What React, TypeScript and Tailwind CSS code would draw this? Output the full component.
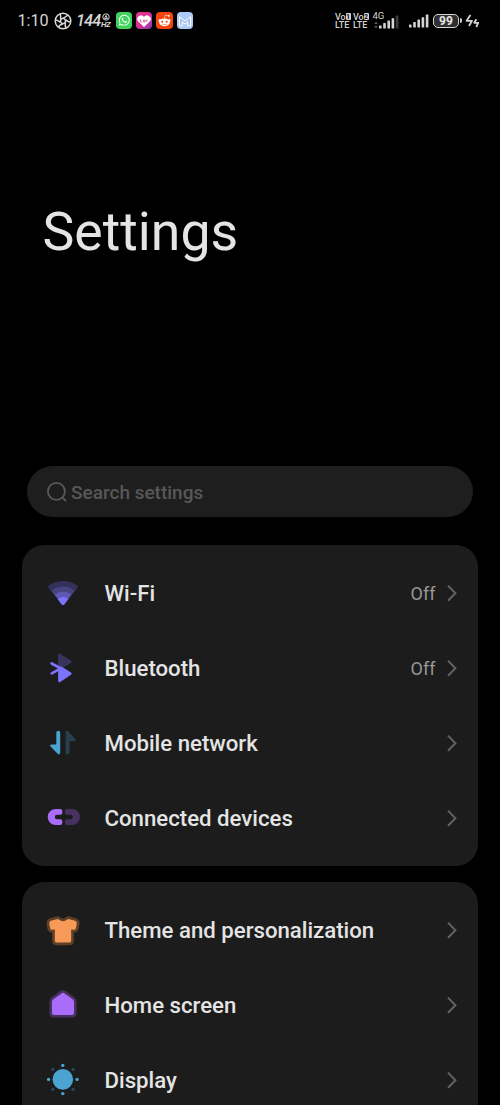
import type { ReactNode } from "react";
import { FaRedditAlien, FaWhatsapp } from "react-icons/fa";

type Item = {
  label: string;
  icon: ReactNode;
  value?: string;
};

const connectivity: Item[] = [
  { label: "Wi-Fi", icon: <WifiIcon />, value: "Off" },
  { label: "Bluetooth", icon: <BluetoothIcon />, value: "Off" },
  { label: "Mobile network", icon: <NetworkIcon /> },
  { label: "Connected devices", icon: <LinkIcon /> },
];

const appearance: Item[] = [
  { label: "Theme and personalization", icon: <ShirtIcon /> },
  { label: "Home screen", icon: <HomeIcon /> },
  { label: "Display", icon: <DisplayIcon /> },
];

function IconBox({ children }: { children: ReactNode }) {
  return (
    <svg viewBox="0 0 40 40" className="size-10 shrink-0" fill="none" strokeLinecap="round" strokeLinejoin="round">
      {children}
    </svg>
  );
}

function WifiIcon() {
  return (
    <IconBox>
      <path d="M20 32 L5.4 14.8 Q4.6 13.6 5.8 12.6 Q12 8 20 8 Q28 8 34.2 12.6 Q35.4 13.6 34.6 14.8 Z" fill="#34325a" />
      <path d="M20 32 L8.2 17.8 A18.4 18.4 0 0 1 31.8 17.8 Z" fill="#484480" />
      <path d="M20 32 L11.6 21.8 A13.2 13.2 0 0 1 28.4 21.8 Z" fill="#5f59b5" />
      <path d="M18.6 31.4 L14.6 26 A8.4 8.4 0 0 1 25.4 26 L21.4 31.4 Q20 32.8 18.6 31.4 Z" fill="#7b74fb" />
    </IconBox>
  );
}

function BluetoothIcon() {
  return (
    <IconBox>
      <path d="M16.4 6.8 V18.4 L20.5 18 L27.3 13.9 Z" fill="#37345d" stroke="#37345d" strokeWidth="2.6" />
      <path d="M16.5 20.4 L18.6 20.2 L27.2 25.7 L16.5 32.8 Z" fill="#7b74fb" stroke="#7b74fb" strokeWidth="2.8" />
      <path d="M8.6 15.4 L19 21 M8.8 25.4 L17.6 20.4" stroke="#7b74fb" strokeWidth="2.8" />
    </IconBox>
  );
}

function NetworkIcon() {
  return (
    <IconBox>
      <path d="M13.3 9.6 Q13.3 7.8 15.2 7.8 Q17.2 7.8 17.2 9.6 V29.8 Q16.7 32.2 14.9 31 L7.3 23.2 Q6.7 21.8 8.3 21.6 H13.3 Z" fill="#4aa3d0" />
      <path d="M26.5 29.4 Q26.5 31.3 24.6 31.3 Q22.6 31.3 22.6 29.4 V9.2 Q23.1 6.8 24.9 8 L32.7 16.6 Q33.3 18 31.7 18.2 H26.5 Z" fill="#26404d" />
    </IconBox>
  );
}

function LinkIcon() {
  return (
    <IconBox>
      <path d="M12.7 11 H17.3 Q19.3 11 19.3 13 V15 Q19.3 16.6 17.6 16.8 H14 A2.2 2.2 0 0 0 14 21.2 H17.6 Q19.3 21.4 19.3 23 V25 Q19.3 27 17.3 27 H12.7 A8 8 0 0 1 12.7 11 Z" fill="#a96cfb" />
      <path d="M29 11 H24 Q22 11 22 13 V15 Q22 16.6 23.7 16.8 H27.6 A2.2 2.2 0 0 1 27.6 21.2 H23.7 Q22 21.4 22 23 V25 Q22 27 24 27 H29 A8 8 0 0 0 29 11 Z" fill="#47315f" />
    </IconBox>
  );
}

function ShirtIcon() {
  const shirt =
    "M13.6 9.2 Q14.8 8.8 15.8 9.6 Q20 13 24.2 9.6 Q25.2 8.8 26.4 9.2 L32 10.8 Q34 11.6 33.8 13.6 L32.8 18.6 Q32.4 20 31 19.8 L28.2 19.4 V30.4 Q28.2 32.6 26 32.6 H14 Q11.8 32.6 11.8 30.4 V19.4 L9 19.8 Q7.6 20 7.2 18.6 L6.2 13.6 Q6 11.6 8 10.8 Z";
  return (
    <IconBox>
      <path d={shirt} stroke="#5e3f28" strokeWidth="5.4" />
      <path d={shirt} fill="#f79a57" />
    </IconBox>
  );
}

function HomeIcon() {
  const house = "M18.4 8.4 Q20 7.2 21.6 8.4 L30 14.6 Q31 15.4 31 17 V28 Q31 30 29 30 H11 Q9 30 9 28 V17 Q9 15.4 10 14.6 Z";
  return (
    <IconBox>
      <path d={house} stroke="#47315f" strokeWidth="5.2" />
      <path d={house} fill="#a96cfb" />
    </IconBox>
  );
}

function DisplayIcon() {
  return (
    <IconBox>
      <circle cx="19.8" cy="19.4" r="10.3" fill="#4aa3d0" />
      <g fill="#4aa3d0">
        <circle cx="19.8" cy="5.4" r="1.7" />
        <circle cx="19.8" cy="33.6" r="1.7" />
        <circle cx="5.6" cy="19.4" r="1.7" />
        <circle cx="34.1" cy="19.4" r="1.7" />
      </g>
      <g fill="#28495a">
        <circle cx="9.8" cy="9.4" r="1.6" />
        <circle cx="30" cy="9.4" r="1.6" />
        <circle cx="9.8" cy="29.4" r="1.6" />
        <circle cx="30" cy="29.4" r="1.6" />
      </g>
    </IconBox>
  );
}

function Chevron() {
  return (
    <svg viewBox="0 0 10 18" className="ml-[11px] h-[18px] w-[10px] shrink-0" fill="none" stroke="#626262" strokeWidth="2">
      <path d="M1 1.6 L8.4 9.2 L1 16.8" />
    </svg>
  );
}

function Card({ items }: { items: Item[] }) {
  return (
    <section className="mx-[22px] shrink-0 rounded-[22px] bg-[#1c1c1c] pt-[10.5px] pb-[10px]">
      {items.map((item) => (
        <div key={item.label} className="flex h-[75px] items-center pr-[21.5px] pl-[21px]">
          {item.icon}
          <span className="ml-[21.5px] flex-1 text-[22.2px] leading-7 font-medium whitespace-nowrap text-[#e4e4e4]">
            {item.label}
          </span>
          {item.value && <span className="pt-px text-[18px] leading-6 text-[#989898]">{item.value}</span>}
          <Chevron />
        </div>
      ))}
    </section>
  );
}

function Shutter() {
  return (
    <svg viewBox="0 0 18 18" className="ml-[6.5px] size-[18px] shrink-0" fill="none" stroke="#dadada" strokeWidth="1.5">
      <circle cx="9" cy="9" r="7.8" />
      {[0, 60, 120, 180, 240, 300].map((deg) => (
        <path key={deg} d="M9 6.2 Q12.4 5 13.8 2.8 M9 6.2 L11.4 7.6" transform={`rotate(${deg} 9 9)`} />
      ))}
    </svg>
  );
}

function Volte({ sim }: { sim: string }) {
  return (
    <div className="w-[15.5px] text-[9px] leading-[8px] font-medium">
      <div className="flex items-center">
        Vo
        <span className="flex h-[7px] w-[5px] items-center justify-center rounded-[1px] bg-[#d4d4d4] text-[6.5px] font-bold text-black">
          {sim}
        </span>
      </div>
      <div>LTE</div>
    </div>
  );
}

function Bars({ last }: { last: string }) {
  return (
    <svg viewBox="0 0 20 14" className="h-[14px] w-5" fill="#d4d4d4">
      <rect x="0" y="10.4" width="2.6" height="3.2" rx=".6" />
      <rect x="4.2" y="8" width="2.6" height="5.6" rx=".6" />
      <rect x="8.4" y="5.6" width="2.6" height="8" rx=".6" />
      <rect x="12.6" y="3.2" width="2.6" height="10.4" rx=".6" />
      <rect x="16.8" y="0.6" width="2.6" height="13" rx=".6" fill={last} />
    </svg>
  );
}

function StatusBar() {
  return (
    <header className="flex h-[41px] shrink-0 items-center pl-[17.5px] text-[#d4d4d4]">
      <span className="w-[30px] text-[16.2px] leading-5 whitespace-nowrap">1:10</span>
      <Shutter />
      <span className="ml-[4px] w-[25px] pt-px text-[16.5px] leading-5 font-medium tracking-[-1px] italic">144</span>
      <span className="flex w-[9px] flex-col items-center text-[8px] leading-[7px] font-bold tracking-[-0.5px] italic">
        <svg viewBox="0 0 8 8" className="size-[8px]" fill="none" stroke="#d4d4d4" strokeWidth="1">
          <circle cx="4" cy="4" r="3.2" />
          <path d="M2.6 5.6 L4 2.4 L5.4 5.6 Z" />
        </svg>
        HZ
      </span>

      <div className="ml-[6px] flex gap-[4px]">
        <span className="flex size-[16.2px] items-center justify-center rounded-[4px] bg-[#3ed35c] text-white">
          <FaWhatsapp size={12.5} />
        </span>
        <span className="flex size-[16.2px] items-center justify-center rounded-[4px] bg-linear-to-br from-[#f0368a] via-[#d92f94] to-[#8a35b8]">
          <svg viewBox="0 0 14 14" className="size-[14px]">
            <path d="M7 13 L1.2 7.6 A3.6 3.6 0 0 1 7 2.8 A3.6 3.6 0 0 1 12.8 7.6 Z" fill="#fff" />
            <path d="M3.4 5 V8 H5 M6.4 6.2 H8 V8 H6.4 Z M9.2 8 V6.2 H10.6" fill="none" stroke="#e0468f" strokeWidth=".8" />
          </svg>
        </span>
        <span className="flex size-[16.2px] items-center justify-center rounded-[4px] bg-[#f4450f] text-white">
          <FaRedditAlien size={13} />
        </span>
        <span className="flex size-[16.2px] items-center justify-center rounded-[4px] bg-[#adcbf5]">
          <svg viewBox="0 0 14 14" className="size-[14px]" fill="none" strokeLinejoin="round">
            <path d="M1.4 11.8 V2.8 L7 7.2 L12.6 2.8 V11.8 H9.8 V7.8 L7 10 L4.2 7.8 V11.8 Z" fill="#a3c0ee" stroke="#fff" strokeWidth="1" />
          </svg>
        </span>
      </div>

      <div className="ml-auto flex items-center pr-[20.5px]">
        <Volte sim="1" />
        <span className="w-[2.5px]" />
        <Volte sim="2" />
        <div className="relative ml-[4px] flex h-[17px] w-[26px] items-end justify-end">
          <span className="absolute -top-[1px] left-0 text-[9.5px] leading-[10px]">4G</span>
          <svg viewBox="0 0 4 8" className="absolute bottom-0 left-px h-[8px] w-[4px]" fill="#555">
            <path d="M0 3 L2 .5 L4 3 Z M0 5 L2 7.5 L4 5 Z" />
          </svg>
          <Bars last="#3c3c3c" />
        </div>
        <span className="ml-[10.5px] flex h-[17px] items-end pb-px">
          <Bars last="#d4d4d4" />
        </span>
        <div className="ml-[4px] flex h-[14px] w-[26px] items-center justify-center rounded-[5px] border-[1.5px] border-[#d4d4d4] bg-[#303030] text-[12px] leading-none font-bold text-[#e6e6e6]">
          99
        </div>
        <span className="ml-px h-[5px] w-[1.5px] rounded-r bg-[#d4d4d4]" />
        <svg viewBox="0 0 15 14" className="ml-[3px] h-[14px] w-[15px]" fill="none" stroke="#d4d4d4" strokeWidth="1.8" strokeLinejoin="round">
          <path d="M5.4 1 L1.6 6.8 H7 L4 12" />
          <path d="M11.4 5.2 L9.2 8.8 H13.2 L11.2 13" />
        </svg>
      </div>
    </header>
  );
}

export default function App() {
  return (
    <main className="flex h-[1105px] w-[500px] flex-col overflow-hidden bg-black font-[Roboto,sans-serif]">
      <StatusBar />

      <div className="flex h-[425px] shrink-0 pt-[159px] pl-[42.5px]">
        <h1 className="text-[53.6px] leading-[64px] font-normal text-[#e4e4e4]">Settings</h1>
      </div>

      <div className="mr-[27px] mb-[28px] ml-[26.5px] flex h-[51px] shrink-0 items-center rounded-full bg-[#1e1e1e] pl-[20.5px] text-[#585858]">
        <svg viewBox="0 0 20 20" className="size-5" fill="none" stroke="#585858" strokeWidth="1.8">
          <circle cx="9.4" cy="9.4" r="8.5" />
          <path d="M15.6 15.6 L19 19" />
        </svg>
        <span className="ml-[4px] pt-[2px] text-[19px] leading-6 font-medium">Search settings</span>
      </div>

      <Card items={connectivity} />
      <div className="h-[16.5px] shrink-0" />
      <Card items={appearance} />
    </main>
  );
}
